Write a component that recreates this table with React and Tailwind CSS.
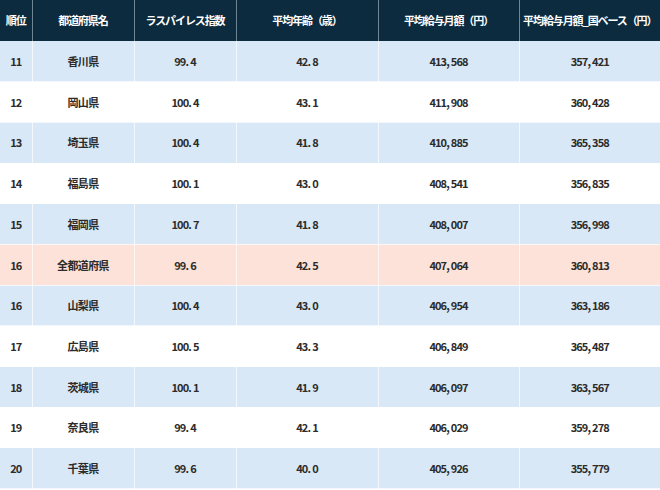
const rows = [
  ["11", "香川県", "99.4", "42.8", "413,568", "357,421"],
  ["12", "岡山県", "100.4", "43.1", "411,908", "360,428"],
  ["13", "埼玉県", "100.4", "41.8", "410,885", "365,358"],
  ["14", "福島県", "100.1", "43.0", "408,541", "356,835"],
  ["15", "福岡県", "100.7", "41.8", "408,007", "356,998"],
  ["16", "全都道府県", "99.6", "42.5", "407,064", "360,813", true],
  ["16", "山梨県", "100.4", "43.0", "406,954", "363,186"],
  ["17", "広島県", "100.5", "43.3", "406,849", "365,487"],
  ["18", "茨城県", "100.1", "41.9", "406,097", "363,567"],
  ["19", "奈良県", "99.4", "42.1", "406,029", "359,278"],
  ["20", "千葉県", "99.6", "40.0", "405,926", "355,779"],
];

const headers = [
  "順位",
  "都道府県名",
  "ラスパイレス指数",
  "平均年齢（歳）",
  "平均給与月額（円）",
  "平均給与月額_国ベース（円）",
];

const widths = ["w-[32px]", "w-[102px]", "w-[102px]", "w-[142px]", "w-[141px]", "w-[141px]"];

// separators in the source are followed by a little gap: "99. 4", "413, 568"
const fmt = (s) =>
  s.split(/([.,])/).map((p, i) =>
    p === "." || p === "," ? (
      <span key={i} className="mr-[2px]">
        {p}
      </span>
    ) : (
      p
    )
  );

export default function App() {
  return (
    <div
      className="w-[660px] h-[490px] overflow-hidden bg-white"
      style={{ fontFamily: '"Noto Sans CJK JP", "Noto Sans", sans-serif' }}
    >
      <table className="w-[660px] table-fixed border-collapse">
        <thead>
          <tr className="h-[41px] bg-[#0d2b3e]">
            {headers.map((h, i) => (
              <th
                key={i}
                className={`${widths[i]} border-x border-[#6f8494] p-0 text-center text-[11px] font-bold text-white tracking-[-1.1px] first:border-l-0 last:border-r-0`}
              >
                {h}
              </th>
            ))}
          </tr>
        </thead>
        <tbody>
          {rows.map((r, idx) => {
            const bg = r[6] ? "bg-[#fce2d8]" : idx % 2 === 0 ? "bg-[#d9e8f6]" : "bg-white";
            return (
              <tr key={idx} className={`h-[40.7px] ${bg}`}>
                {r.slice(0, 6).map((c, i) => (
                  <td
                    key={i}
                    className={`border-x border-b border-white/70 p-0 text-center text-[11px] font-bold text-[#2b2b2b] first:border-l-0 last:border-r-0 ${
                      i === 1 ? "tracking-[-0.6px]" : "tracking-[-0.9px]"
                    }`}
                  >
                    {i === 1 ? c : fmt(c)}
                  </td>
                ))}
              </tr>
            );
          })}
        </tbody>
      </table>
    </div>
  );
}
